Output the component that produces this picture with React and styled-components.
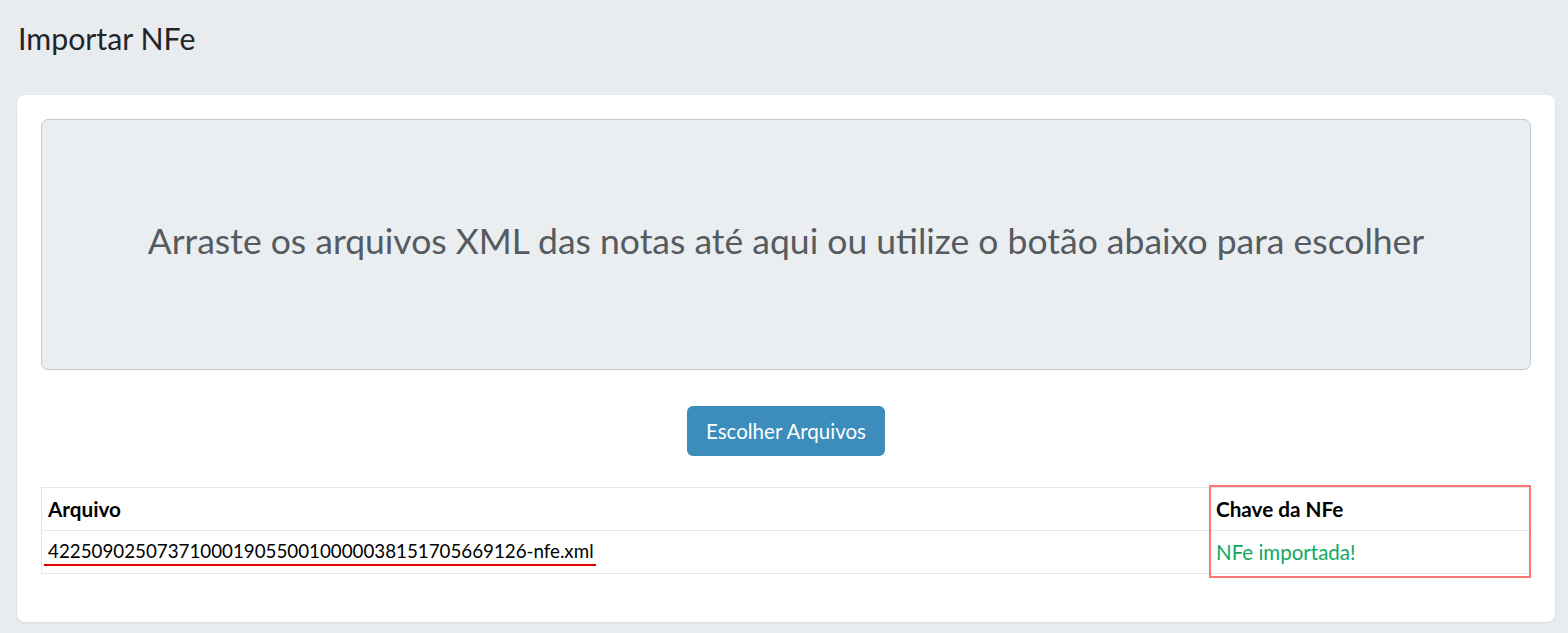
import React from 'react'
import styled, { createGlobalStyle } from 'styled-components'

const GlobalStyle = createGlobalStyle`
  html, body {
    margin: 0;
    padding: 0;
    background: #e9ecef;
    font-family: Lato, "Noto Sans", sans-serif;
    color: #212529;
  }
`

const Page = styled.div`
  padding: 0 13px 12px 17px;
`

const Title = styled.h1`
  margin: 0;
  padding: 20px 0 0 1px;
  height: 95px;
  box-sizing: border-box;
  font-size: 30.3px;
  line-height: 1.2;
  font-weight: 400;
  color: #212529;
`

const Card = styled.div`
  background: #fff;
  border-radius: 8px;
  box-shadow: 0 1px 3px rgba(0, 0, 0, 0.08);
  padding: 24px 24px 48px 24px;
`

const DropZone = styled.div`
  height: 251px;
  box-sizing: border-box;
  background: #eaeef0;
  border: 1px solid #c6c9cb;
  border-radius: 7px;
  display: flex;
  align-items: center;
  justify-content: center;
  padding-bottom: 8px;
  font-size: 35.5px;
  color: #555b60;
`

const ButtonRow = styled.div`
  display: flex;
  justify-content: center;
  padding: 36px 0 31px;
`

const Button = styled.button`
  height: 50px;
  padding: 0 19px;
  border: none;
  border-radius: 6px;
  background: #3c8dbc;
  color: #fff;
  font-family: inherit;
  font-size: 20.5px;
`

const TableWrap = styled.div`
  position: relative;
`

const Table = styled.table`
  width: 100%;
  border-collapse: collapse;
  border-top: 1px solid #e6e6e6;
  border-left: 1px solid #e6e6e6;
  font-size: 20.5px;
`

const Cell = styled.td`
  height: 43px;
  box-sizing: border-box;
  padding: 0 6px;
  border-bottom: 1px solid #e6e6e6;
  text-align: left;
  font-weight: ${p => (p.$head ? 700 : 400)};
  font-size: ${p => (p.$head ? '20.7px' : 'inherit')};
  color: ${p => (p.$ok ? '#11a860' : '#000')};
  width: ${p => (p.$narrow ? '321px' : 'auto')};
`

const FileName = styled.span`
  display: inline-block;
  padding: 0 2px 1px 4px;
  margin-left: -4px;
  border-bottom: 2px solid #e60000;
  font-size: 18.75px;
  line-height: 1.2;
`

const Marker = styled.div`
  position: absolute;
  top: -2px;
  bottom: -4px;
  right: 0;
  width: 322px;
  box-sizing: border-box;
  border: 2px solid #ff7676;
  pointer-events: none;
`

export default function App() {
  return (
    <>
      <GlobalStyle />
      <Page>
        <Title>Importar NFe</Title>
        <Card>
          <DropZone>
            Arraste os arquivos XML das notas até aqui ou utilize o botão abaixo para escolher
          </DropZone>
          <ButtonRow>
            <Button>Escolher Arquivos</Button>
          </ButtonRow>
          <TableWrap>
            <Table>
              <tbody>
                <tr>
                  <Cell $head>Arquivo</Cell>
                  <Cell $head $narrow>Chave da NFe</Cell>
                </tr>
                <tr>
                  <Cell>
                    <FileName>42250902507371000190550010000038151705669126-nfe.xml</FileName>
                  </Cell>
                  <Cell $ok $narrow>NFe importada!</Cell>
                </tr>
              </tbody>
            </Table>
            <Marker />
          </TableWrap>
        </Card>
      </Page>
    </>
  )
}
